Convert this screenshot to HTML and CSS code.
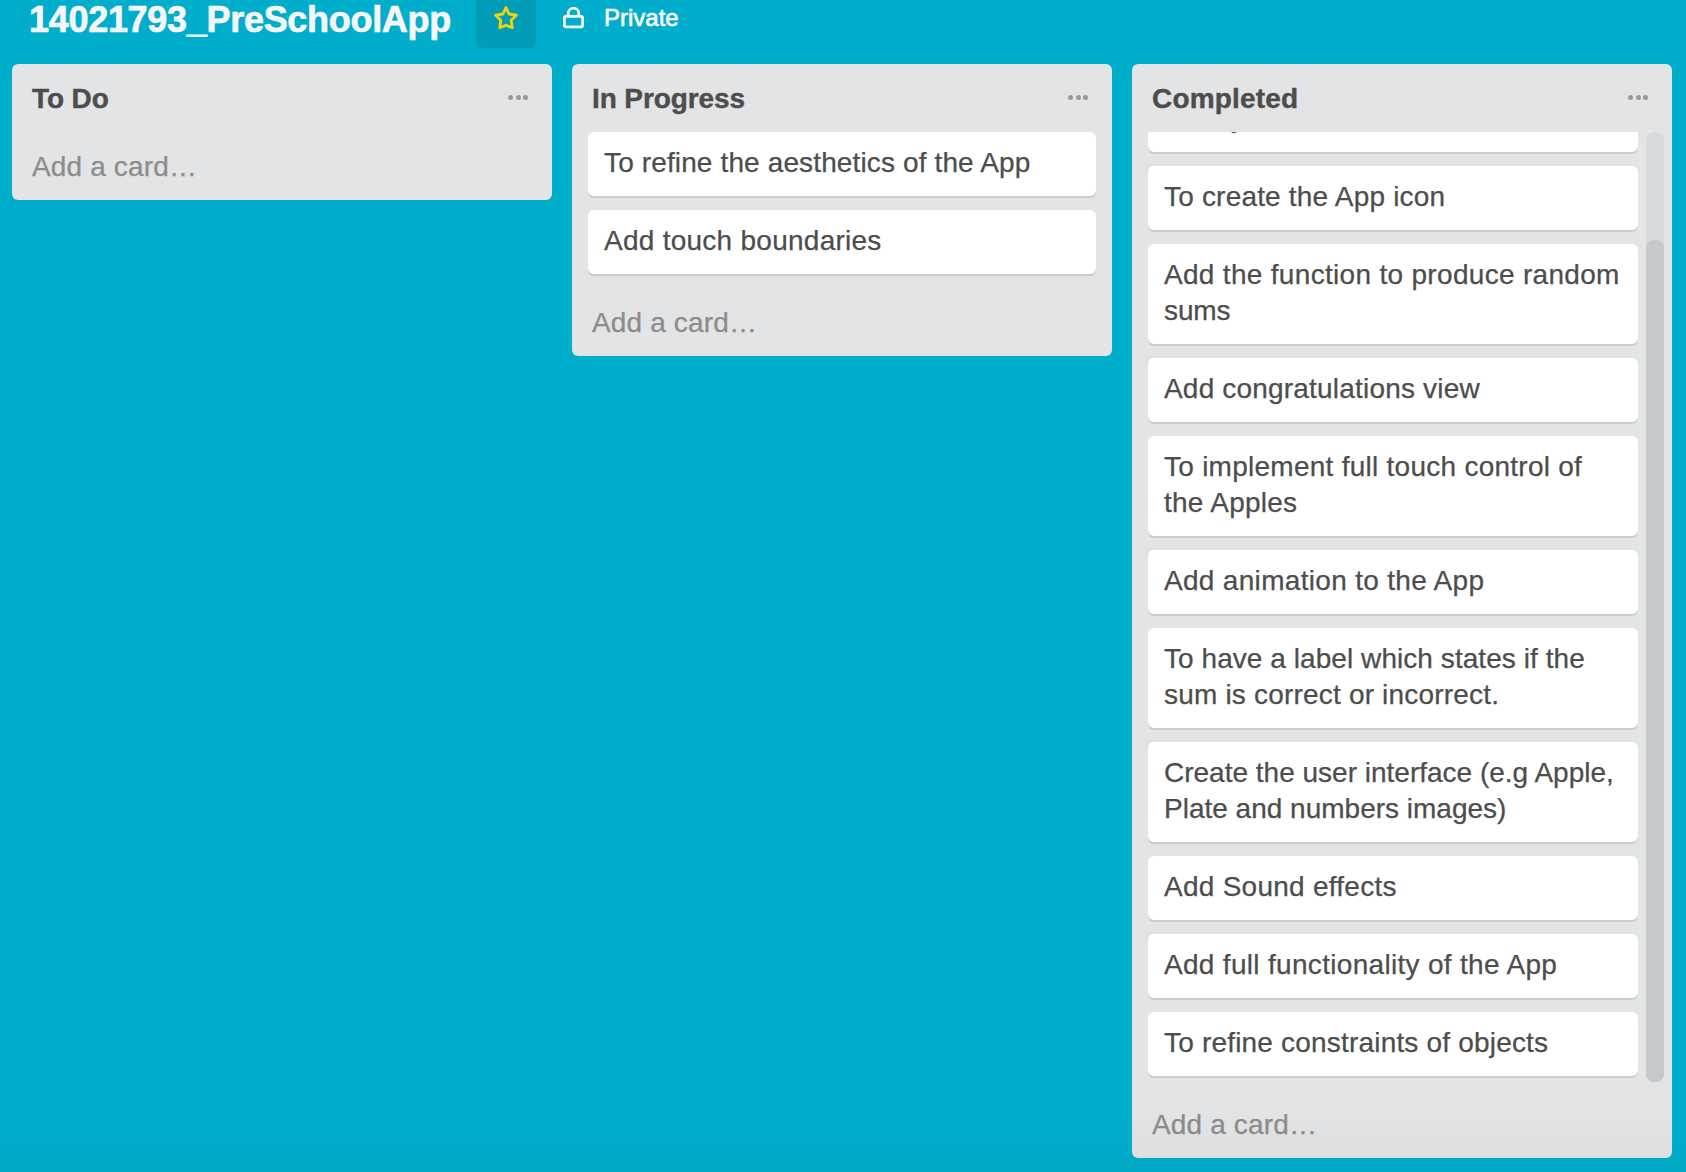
FILE: index.html
```html
<!DOCTYPE html>
<html lang="en">
<head>
<meta charset="utf-8">
<title>14021793_PreSchoolApp</title>
<link rel="stylesheet" href="styles.css">
</head>
<body>
<div class="app">
  <header class="board-header">
    <h1 class="board-title">14021793_PreSchoolApp</h1>
    <button class="star" aria-label="Star board"><svg width="24" height="24" viewBox="0 0 24 24"><path d="M12 1.5 15 8 22.3 9.2 17.2 14.2 18.2 21.8 12 19.2 5.8 21.8 6.8 14.2 1.7 9.2 9 8Z" fill="none" stroke="#f2d600" stroke-width="2.8" stroke-linejoin="round"/></svg></button>
    <div class="visibility">
      <svg class="lock" width="21" height="22" viewBox="0 0 21 22"><rect x="1.4" y="9.4" width="18.2" height="10.4" rx="1.5" fill="none" stroke="#f6f6f6" stroke-width="2.8"/><path d="M5.2 9V6.5a5.3 5.3 0 0 1 10.6 0V9" fill="none" stroke="#f6f6f6" stroke-width="2.8"/></svg>
      <span class="visibility-text">Private</span>
    </div>
  </header>
  <main class="board">
    <section class="list">
      <div class="list-header"><h2 class="list-title snug">To Do</h2><span class="menu"><i></i><i></i><i></i></span></div>
      <a class="add-card">Add a card…</a>
    </section>
    <section class="list">
      <div class="list-header"><h2 class="list-title snug">In Progress</h2><span class="menu"><i></i><i></i><i></i></span></div>
      <div class="cards">
        <article class="card track-s">To refine the aesthetics of the App</article>
        <article class="card track-l">Add touch boundaries</article>
      </div>
      <a class="add-card">Add a card…</a>
    </section>
    <section class="list">
      <div class="list-header"><h2 class="list-title track-m">Completed</h2><span class="menu"><i></i><i></i><i></i></span></div>
      <div class="scroll-area">
        <div class="cards scrolled">
          <article class="card passed">modify</article>
          <article class="card track-m">To create the App icon</article>
          <article class="card track-xl">Add the function to produce random<br><span class="snug">sums</span></article>
          <article class="card track-m">Add congratulations view</article>
          <article class="card track-l">To implement full touch control of<br>the Apples</article>
          <article class="card track-xl">Add animation to the App</article>
          <article class="card"><span class="track-xs">To have a label which states if the</span><br><span class="track-m">sum is correct or incorrect.</span></article>
          <article class="card">Create the user interface (e.g Apple,<br>Plate and numbers images)</article>
          <article class="card track-l">Add Sound effects</article>
          <article class="card track-xl">Add full functionality of the App</article>
          <article class="card track-m">To refine constraints of objects</article>
        </div>
        <div class="track"><div class="thumb"></div></div>
      </div>
      <a class="add-card">Add a card…</a>
    </section>
  </main>
  <div class="shade"></div>
</div>
</body>
</html>
```

FILE: styles.css
```css
* { box-sizing: border-box; }

body {
  margin: 0;
  background: #00aecc;
  color: #4d4d4d;
  font: 28px/36px "Liberation Sans", Arial, sans-serif;
}

.app {
  position: relative;
  height: 1172px;
  overflow: hidden;
}

.board-header {
  display: flex;
  align-items: flex-start;
  height: 64px;
  padding-left: 29px;
  color: #f6f6f6;
}

.board-title {
  width: 447px;
  margin: 0;
  font-size: 36px;
  line-height: 40px;
  letter-spacing: -0.3px;
  white-space: nowrap;
  -webkit-text-stroke: 0.7px #f6f6f6;
}

.star {
  display: flex;
  justify-content: center;
  width: 60px;
  height: 48px;
  padding: 6px 0 0;
  border: 0;
  border-radius: 0 0 6px 6px;
  background: #009cb8;
}

.star svg { margin-left: -1px; }

.visibility {
  display: flex;
  gap: 20px;
  padding-left: 27px;
}

.lock { margin-top: 7px; }

.visibility-text {
  font-size: 24px;
  line-height: 36px;
  -webkit-text-stroke: 0.7px #f6f6f6;
}

.board {
  display: flex;
  align-items: flex-start;
  gap: 20px;
  padding-left: 12px;
}

.list {
  flex: none;
  width: 540px;
  border-radius: 6px;
  background: #e2e4e6;
}

.list-header {
  display: flex;
  justify-content: space-between;
  height: 68px;
  padding: 17px 24px 0 20px;
}

.list-title {
  margin: 0;
  font-size: 28px;
  line-height: 36px;
  -webkit-text-stroke: 0.4px #4d4d4d;
}

.menu {
  display: flex;
  gap: 2.5px;
  padding-top: 14px;
}

.menu i {
  width: 5px;
  height: 5px;
  border-radius: 50%;
  background: #999;
}

.cards {
  display: flex;
  flex-direction: column;
  gap: 12px;
  padding: 0 16px;
}

.card {
  margin-bottom: 2px;
  padding: 13px 0 15px 16px;
  border-radius: 6px;
  background: #fff;
  box-shadow: 0 2px 0 #ccc;
  white-space: nowrap;
  -webkit-text-stroke: 0.25px #4d4d4d;
}

.passed {
  padding: 12px 0 16px 16px;
  letter-spacing: -0.3px;
}

.snug { letter-spacing: -0.1px; }
.track-xs { letter-spacing: 0.06px; }
.track-s { letter-spacing: 0.13px; }
.track-m { letter-spacing: 0.19px; }
.track-l { letter-spacing: 0.26px; }
.track-xl { letter-spacing: 0.31px; }

.add-card {
  display: block;
  height: 68px;
  padding: 17px 20px 0;
  color: #8c8c8c;
  letter-spacing: 0.15px;
  -webkit-text-stroke: 0.25px #8c8c8c;
}

.cards + .add-card {
  height: 80px;
  padding-top: 29px;
}

.scroll-area {
  display: flex;
  justify-content: space-between;
  height: 950px;
  padding-right: 8px;
  overflow: hidden;
}

.scrolled {
  width: 506px;
  padding-right: 0;
  margin-top: -44px;
}

.scroll-area + .add-card {
  height: 76px;
  padding-top: 25px;
}

.track {
  width: 18px;
  height: 950px;
  padding-top: 108px;
  border-radius: 8px;
  background: #d6dadc;
}

.thumb {
  height: 842px;
  border-radius: 8px;
  background: #c4c9cc;
}

/* faint darkening along the bottom edge of the window */
.shade {
  position: absolute;
  inset: auto 0 0;
  height: 64px;
  background: linear-gradient(transparent, rgba(0, 0, 0, 0.03));
}
```
